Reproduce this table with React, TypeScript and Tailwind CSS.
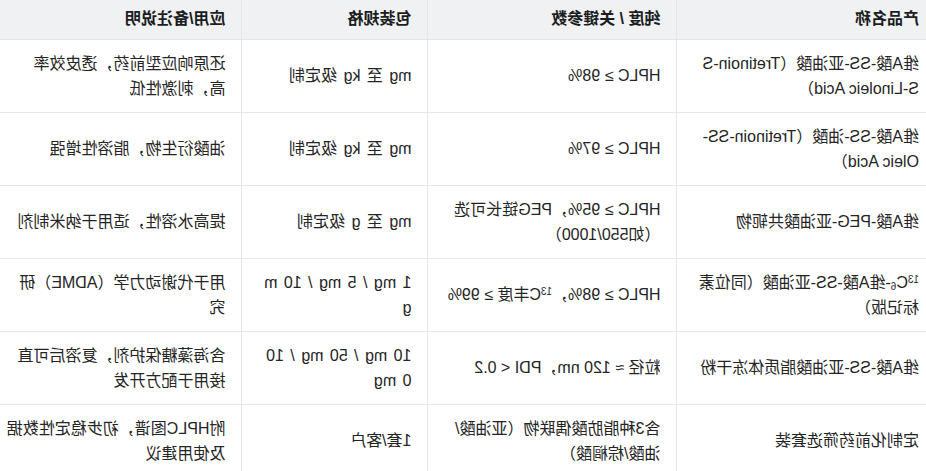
import React from "react";

type Cell = React.ReactNode[];

const rows: { c1: Cell; c2: Cell; c3: Cell; c4: Cell }[] = [
  {
    c1: ["维A酸-SS-亚油酸（Tretinoin-S", "S-Linoleic Acid）"],
    c2: ["HPLC ≥ 98%"],
    c3: ["mg 至 kg 级定制"],
    c4: ["还原响应型前药，透皮效率", "高，刺激性低"],
  },
  {
    c1: ["维A酸-SS-油酸（Tretinoin-SS-", "Oleic Acid）"],
    c2: ["HPLC ≥ 97%"],
    c3: ["mg 至 kg 级定制"],
    c4: ["油酸衍生物，脂溶性增强"],
  },
  {
    c1: ["维A酸-PEG-亚油酸共轭物"],
    c2: ["HPLC ≥ 95%，PEG链长可选", "（如550/1000）"],
    c3: ["mg 至 g 级定制"],
    c4: ["提高水溶性，适用于纳米制剂"],
  },
  {
    c1: [
      <>
        <sup className="text-[10px]">13</sup>C<sub className="text-[10px]">6</sub>-维A酸-SS-亚油酸（同位素
      </>,
      "标记版）",
    ],
    c2: [
      <>
        HPLC ≥ 98%，<sup className="text-[10px]">13</sup>C丰度 ≥ 99%
      </>,
    ],
    c3: ["1 mg / 5 mg / 10 m", "g"],
    c4: ["用于代谢动力学（ADME）研", "究"],
  },
  {
    c1: ["维A酸-SS-亚油酸脂质体冻干粉"],
    c2: ["粒径 ≈ 120 nm，PDI < 0.2"],
    c3: ["10 mg / 50 mg / 10", "0 mg"],
    c4: ["含海藻糖保护剂，复溶后可直", "接用于配方开发"],
  },
  {
    c1: ["定制化前药筛选套装"],
    c2: ["含3种脂肪酸偶联物（亚油酸/", "油酸/棕榈酸）"],
    c3: ["1套/客户"],
    c4: ["附HPLC图谱，初步稳定性数据", "及使用建议"],
  },
];

function Lines({ lines }: { lines: Cell }) {
  return (
    <>
      {lines.map((l, i) => (
        <div key={i} className="whitespace-nowrap">
          {l}
        </div>
      ))}
    </>
  );
}

export default function App() {
  const font = {
    fontFamily: '"Liberation Sans", Arial, "Noto Sans CJK SC", sans-serif',
  };
  const th =
    "h-[39px] border-r border-b border-[#e4e6ea] bg-[#f0f1f3] text-left align-middle font-bold text-[#1a1d21] px-4";
  const td =
    "h-[73px] border-r border-b border-[#e4e6ea] align-middle text-[#242424] px-4 leading-[25px]";
  return (
    <div className="w-[926px] h-[471px] overflow-hidden bg-white [transform:scaleX(-1)]" style={font}>
      <table className="table-fixed border-collapse w-[926px] text-[16px]">
        <colgroup>
          <col className="w-[249px]" />
          <col className="w-[249px]" />
          <col className="w-[186px]" />
          <col className="w-[242px]" />
        </colgroup>
        <thead>
          <tr>
            <th className={th + " pl-[7px]"}>产品名称</th>
            <th className={th}>纯度 / 关键参数</th>
            <th className={th}>包装规格</th>
            <th className={th}>应用/备注说明</th>
          </tr>
        </thead>
        <tbody>
          {rows.map((r, i) => (
            <tr key={i}>
              <td className={td + " pl-[7px]"}>
                <Lines lines={r.c1} />
              </td>
              <td className={td}>
                <Lines lines={r.c2} />
              </td>
              <td className={td + " [word-spacing:2px]"}>
                <Lines lines={r.c3} />
              </td>
              <td className={td}>
                <Lines lines={r.c4} />
              </td>
            </tr>
          ))}
        </tbody>
      </table>
    </div>
  );
}
